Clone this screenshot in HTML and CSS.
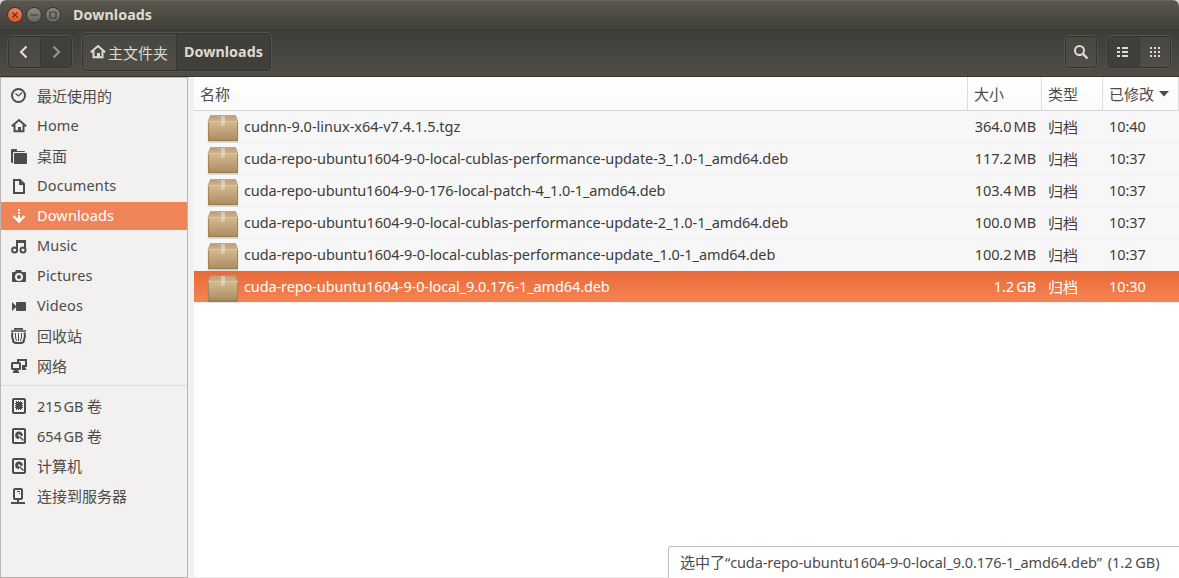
FILE: index.html
```html
<!DOCTYPE html>
<html lang="zh-CN">
<head>
<meta charset="utf-8">
<title>Downloads</title>
<link rel="stylesheet" href="styles.css">
</head>
<body>
<svg class="defs" width="0" height="0" aria-hidden="true">
  <defs>
    <linearGradient id="box-front" x1="0" y1="0" x2="0" y2="1"><stop offset="0" stop-color="#d6bb90"/><stop offset="1" stop-color="#a88b61"/></linearGradient>
    <linearGradient id="box-top" x1="0" y1="0" x2="0" y2="1"><stop offset="0" stop-color="#bd9f7b"/><stop offset="1" stop-color="#d0b38a"/></linearGradient>
    <symbol id="package" viewBox="0 0 32 28">
      <path d="M1 26h30v1.500H1z" fill="#000" opacity=".16"/>
      <path d="M3.500.500h25L31 7H1z" fill="url(#box-top)" stroke="#b3946d" stroke-width=".7"/>
      <path d="M1 6.500h30V25q0 1-1 1H2q-1 0-1-1z" fill="url(#box-front)"/>
      <path d="M1 6.500h30" stroke="#dcc49d" stroke-width="1"/>
      <path d="M1.400 7v18.500h29.200V7" fill="none" stroke="#997a4e" stroke-width=".8"/>
      <path d="M14 1h4v9.500h-4z" fill="#eadcc4" opacity=".65"/>
    </symbol>
    <symbol id="home" viewBox="0 0 16 16">
      <path d="M.800 8.300 8 2l7.200 6.300M3.500 7v6.200h9V7" fill="none" stroke="currentColor" stroke-width="2"/>
      <path d="M7 9h3v4H7z" fill="currentColor"/>
    </symbol>
    <symbol id="disk" viewBox="0 0 16 16">
      <rect x="2" y="1" width="12" height="14" rx="1" fill="none" stroke="currentColor" stroke-width="2"/>
      <path d="M8 3.500a3.800 3.800 0 1 0 0 7.600V8.500L6.700 7.200 8 6l2 2 1.800-.3A3.800 3.800 0 0 0 8 3.500z" fill="currentColor"/>
      <path d="m8.500 8.500 4 4" stroke="currentColor" stroke-width="1.500"/>
    </symbol>
  </defs>
</svg>
<div class="window">
  <header class="chrome">
    <div class="titlebar">
      <span class="control close"><svg viewBox="0 0 16 16"><path d="m5.300 5.300 5.400 5.400m0-5.400-5.400 5.400"/></svg></span>
      <span class="control"><svg viewBox="0 0 16 16"><path d="M4.500 8h7"/></svg></span>
      <span class="control"><svg viewBox="0 0 16 16"><path d="M5 5h6v6H5z"/></svg></span>
      <h1 class="title">Downloads</h1>
    </div>
    <div class="toolbar">
      <div class="group nav">
        <span class="button"><svg width="16" height="16" viewBox="0 0 16 16"><path class="chevron" d="M10.500 2.500 5 8l5.500 5.500"/></svg></span>
        <span class="button disabled"><svg width="16" height="16" viewBox="0 0 16 16"><path class="chevron" d="M5.500 2.500 11 8l-5.500 5.500"/></svg></span>
      </div>
      <div class="group path">
        <span class="button home"><svg width="16" height="16"><use href="#home"/></svg><span class="home-label">主文件夹</span></span>
        <span class="button active current">Downloads</span>
      </div>
      <div class="group search">
        <span class="button"><svg width="16" height="16" viewBox="0 0 16 16"><circle cx="6.500" cy="6.500" r="4.500" fill="none" stroke="currentColor" stroke-width="2"/><path d="m9.500 9.500 5 5" stroke="currentColor" stroke-width="2.400"/></svg></span>
      </div>
      <div class="group views">
        <span class="button active"><svg width="16" height="16" viewBox="0 0 16 16"><path fill="currentColor" d="M2 3h3v2H2zm5 0h6v2H7zM2 7h3v2H2zm5 0h6v2H7zm-5 4h3v2H2zm5 0h6v2H7z"/></svg></span>
        <span class="button"><svg width="16" height="16" viewBox="0 0 16 16"><path fill="currentColor" d="M3 3h2v2H3zm4 0h2v2H7zm4 0h2v2h-2zM3 7h2v2H3zm4 0h2v2H7zm4 0h2v2h-2zm-8 4h2v2H3zm4 0h2v2H7zm4 0h2v2h-2z"/></svg></span>
      </div>
    </div>
  </header>
  <div class="content">
    <nav class="sidebar">
      <div class="places">
        <div class="place"><svg viewBox="0 0 16 16"><circle cx="7.500" cy="7.500" r="6.500" fill="none" stroke="currentColor" stroke-width="2"/><path d="m4.500 5.500 3 2.500L11 4.500" fill="none" stroke="currentColor" stroke-width="1.200"/></svg><span>最近使用的</span></div>
        <div class="place"><svg><use href="#home"/></svg><span class="latin">Home</span></div>
        <div class="place"><svg viewBox="0 0 16 16"><path fill="currentColor" d="M0 2q0-1 1-1h4q1 0 1 1v1h7q1 0 1 1H3Q2 4 2 5v10H1q-1 0-1-1zM3 6q0-1 1-1h11q1 0 1 1v9q0 1-1 1H3z"/></svg><span>桌面</span></div>
        <div class="place"><svg viewBox="0 0 16 16"><path d="M3 2h6l4 4v9H3z" fill="none" stroke="currentColor" stroke-width="2"/><path d="M8 2v5h5z" fill="currentColor"/></svg><span class="latin">Documents</span></div>
        <div class="place selected"><svg viewBox="0 0 16 16"><path fill="currentColor" d="M7 1h2v2H7zm0 3h2v2H7zm0 3h2v5H7z"/><path d="M2.500 8 8 13.500 13.500 8" fill="none" stroke="currentColor" stroke-width="2.400"/></svg><span class="latin">Downloads</span></div>
        <div class="place"><svg viewBox="0 0 16 16"><path d="M6 12V3h8v8" fill="none" stroke="currentColor" stroke-width="2"/><path d="M5 2h10v3H5z" fill="currentColor"/><circle cx="3.600" cy="12" r="2.500" fill="none" stroke="currentColor" stroke-width="2"/><circle cx="12" cy="12" r="2.500" fill="none" stroke="currentColor" stroke-width="2"/></svg><span class="latin">Music</span></div>
        <div class="place"><svg viewBox="0 0 16 16"><path fill="currentColor" fill-rule="evenodd" d="M5 2h5l1 2h3q1 0 1 1v8q0 1-1 1H2q-1 0-1-1V5q0-1 1-1h2zm3 3a4 4 0 1 0 0 8 4 4 0 0 0 0-8z"/><circle cx="8" cy="9" r="2" fill="currentColor"/></svg><span class="latin">Pictures</span></div>
        <div class="place"><svg viewBox="0 0 16 16"><path fill="currentColor" d="m1 4 4 4v1l-4 4zM6 4h8q1 0 1 1v7q0 1-1 1H6q-1 0-1-1V5q0-1 1-1z"/></svg><span class="latin">Videos</span></div>
        <div class="place"><svg viewBox="0 0 16 16"><path d="M4 2V.800h7V2M0 3h15" fill="none" stroke="currentColor" stroke-width="1.700"/><path d="M1.500 4.500 1 8l1.500 6 2 1h6l2-1L14 8l-.5-3.500" fill="none" stroke="currentColor" stroke-width="2"/><path d="M4.500 5v4l1 4M7.500 5v8M10.500 5v4l-1 4" fill="none" stroke="currentColor"/></svg><span>回收站</span></div>
        <div class="place"><svg viewBox="0 0 16 16"><path d="M7 4V2h8v6h-4" fill="none" stroke="currentColor" stroke-width="2"/><path d="M11 9h3l1.500 3H11z" fill="currentColor"/><rect x="1" y="5" width="8" height="6" rx=".5" fill="none" stroke="currentColor" stroke-width="2"/><path d="M3 12h4l1.500 3h-7z" fill="currentColor"/></svg><span>网络</span></div>
      </div>
      <div class="places devices">
        <div class="place"><svg viewBox="0 0 16 16"><rect x="2" y="1" width="12" height="14" rx="1" fill="none" stroke="currentColor" stroke-width="2"/><path d="M5 4h6v7H5z" fill="currentColor"/><path d="M4 5.500h8M4 7.500h8M4 9.500h8M5.500 3v9M7.500 3v9M9.500 3v9" stroke="currentColor"/></svg><span class="volume"><span>215 GB</span> 卷</span></div>
        <div class="place"><svg><use href="#disk"/></svg><span class="volume"><span>654 GB</span> 卷</span></div>
        <div class="place"><svg><use href="#disk"/></svg><span>计算机</span></div>
        <div class="place"><svg viewBox="0 0 16 16"><rect x="3" y="1" width="8" height="10" rx="1" fill="none" stroke="currentColor" stroke-width="2"/><path d="M6 3h3v1H6zm2 2h1v1H8zM6 11h2v3H6zM0 14h14v2H0z" fill="currentColor"/></svg><span>连接到服务器</span></div>
      </div>
    </nav>
    <main class="files">
      <div class="columns head">
        <span>名称</span><span>大小</span><span>类型</span><span class="sorted">已修改<svg width="10" height="6" viewBox="0 0 10 6"><path d="M0 0h10L5 5.500z" fill="currentColor"/></svg></span>
      </div>
      <div class="columns row"><span class="file first"><svg><use href="#package"/></svg><span>cudnn-9.0-linux-x64-v7.4.1.5.tgz</span></span><span class="size">364.0 MB</span><span>归档</span><span class="time">10:40</span></div>
      <div class="columns row"><span class="file"><svg><use href="#package"/></svg><span>cuda-repo-ubuntu1604-9-0-local-cublas-performance-update-3_1.0-1_amd64.deb</span></span><span class="size">117.2 MB</span><span>归档</span><span class="time">10:37</span></div>
      <div class="columns row"><span class="file tight"><svg><use href="#package"/></svg><span>cuda-repo-ubuntu1604-9-0-176-local-patch-4_1.0-1_amd64.deb</span></span><span class="size">103.4 MB</span><span>归档</span><span class="time">10:37</span></div>
      <div class="columns row"><span class="file"><svg><use href="#package"/></svg><span>cuda-repo-ubuntu1604-9-0-local-cublas-performance-update-2_1.0-1_amd64.deb</span></span><span class="size">100.0 MB</span><span>归档</span><span class="time">10:37</span></div>
      <div class="columns row"><span class="file"><svg><use href="#package"/></svg><span>cuda-repo-ubuntu1604-9-0-local-cublas-performance-update_1.0-1_amd64.deb</span></span><span class="size">100.2 MB</span><span>归档</span><span class="time">10:37</span></div>
      <div class="columns row selected"><span class="file tight"><svg><use href="#package"/></svg><span>cuda-repo-ubuntu1604-9-0-local_9.0.176-1_amd64.deb</span></span><span class="size">1.2 GB</span><span>归档</span><span class="time">10:30</span></div>
      <div class="status">选中了<span class="status-name">“cuda-repo-ubuntu1604-9-0-local_9.0.176-1_amd64.deb”</span> <span class="status-size">(1.2 GB)</span></div>
    </main>
  </div>
</div>
</body>
</html>
```
FILE: styles.css
```css
* { box-sizing: border-box; }
body {
  margin: 0;
  background: #d8d8d8;
  color: #4c4c4c;
  font: 15px/20px "Noto Sans", "Noto Sans CJK SC", sans-serif;
  white-space: nowrap;
}
.defs { position: absolute; }
.window { display: flex; flex-direction: column; width: 1179px; height: 578px; overflow: hidden; background: #f2f1f0; border-radius: 6px 6px 0 0; }

.chrome { height: 77px; color: #dfdbd2; border-bottom: 1px solid #33322e; background: linear-gradient(#3c3b37, #504d46) 0 29px / 100% 47px no-repeat; }
.titlebar { display: flex; align-items: center; gap: 3px; height: 29px; padding-left: 7px; border-top: 1px solid #69665a; background: linear-gradient(#5a574c, #403f3a); }
.control { width: 16px; height: 16px; border-radius: 50%; border: 1px solid #34332f; background: linear-gradient(#8d8b83, #65635c); }
.control.close { background: linear-gradient(#f4815b, #e2521f); }
.control svg { display: block; width: 16px; height: 16px; margin: -1px; fill: none; stroke: #3a3935; stroke-width: 1.2; }
.title { margin: 0 0 0 9px; font-size: 14.3px; line-height: 20px; font-weight: 700; letter-spacing: .05px; }
.toolbar { display: flex; align-items: center; height: 47px; padding: 0 8px 1px; }
.group { display: flex; height: 32px; border: 1px solid #35342f; border-radius: 4px; box-shadow: 0 0 0 1px #55534b; background: linear-gradient(#474640, #504e47); }
.button { display: flex; align-items: center; justify-content: center; flex: 1; }
.button + .button { border-left: 1px solid #383732; }
.button.active { background: #403f3a; }
.button.disabled { background: #403f3a; color: #96938b; }
.chevron { fill: none; stroke: currentColor; stroke-width: 2.2; }
.nav { width: 64px; }
.path { width: 189px; height: 38px; margin-left: 10px; }
.path .home { flex: 0 0 93px; gap: 2px; padding-right: 1px; }
.path .home-label { padding-top: 2px; }
.path .current { font-weight: 700; font-size: 14.3px; letter-spacing: .05px; }
.search { width: 32px; margin-left: auto; }
.views { width: 64px; margin-left: 10px; }

.content { display: flex; flex: 1; min-height: 0; }
.sidebar { width: 188px; padding-top: 4px; border: 1px solid #b9b6b2; }
.places { display: flex; flex-direction: column; gap: 2px; }
.devices { margin-top: 5px; padding-top: 6px; border-top: 1px solid #dcdad8; }
.place { display: flex; align-items: center; height: 28px; gap: 10px; padding-left: 10px; }
.place svg { width: 16px; height: 16px; flex: none; }
.place.selected { background: #f08459; color: #fff; }
.latin { padding-bottom: 2px; font-size: 14.5px; letter-spacing: .14px; }
.volume { word-spacing: -.3px; }
.volume > span { font-size: 14.5px; letter-spacing: -.05px; word-spacing: -2px; }

.files { position: relative; flex: 1; margin-left: 6px; background: #fff; border-bottom: 1px solid #ebebeb; }
.columns { display: grid; grid-template-columns: 774px 74px 61px 76px; }
.head { height: 34px; border-bottom: 1px solid #d6d6d6; background: linear-gradient(#fff, #fafafa); }
.head > span { display: flex; align-items: center; padding-left: 6px; border-right: 1px solid #dcdcdc; }
.sorted svg { margin-left: 5px; }
.row { height: 32px; border-bottom: 1px solid #f0f0f0; background: #f7f7f7; color: #3c3c3c; line-height: 32px; }
.row > span { padding-left: 6px; }
.row .file { display: flex; padding-left: 13px; gap: 5px; }
.row .file, .row .size, .row .time { font-size: 14.5px; line-height: 31px; letter-spacing: -.08px; }
.row .first { letter-spacing: 0; }
.row .tight { letter-spacing: -.11px; }
.file svg { width: 32px; height: 28px; margin-top: 4px; }
.row .size { padding: 0 6px 0 0; text-align: right; word-spacing: -1.5px; }
.row.selected { color: #fff; background: linear-gradient(#e86b39, #f78352); }
.status { position: absolute; right: 0; bottom: -1px; width: 511px; height: 32px; padding: 5px 0 0 11px; border: 1px solid #c2c0bd; border-width: 1px 0 0 1px; border-radius: 3px 0 0 0; background: #fff; }
.status-name { font-size: 14.5px; letter-spacing: -.09px; }
.status-size { margin-left: 2px; font-size: 14.5px; word-spacing: -1px; }
```
